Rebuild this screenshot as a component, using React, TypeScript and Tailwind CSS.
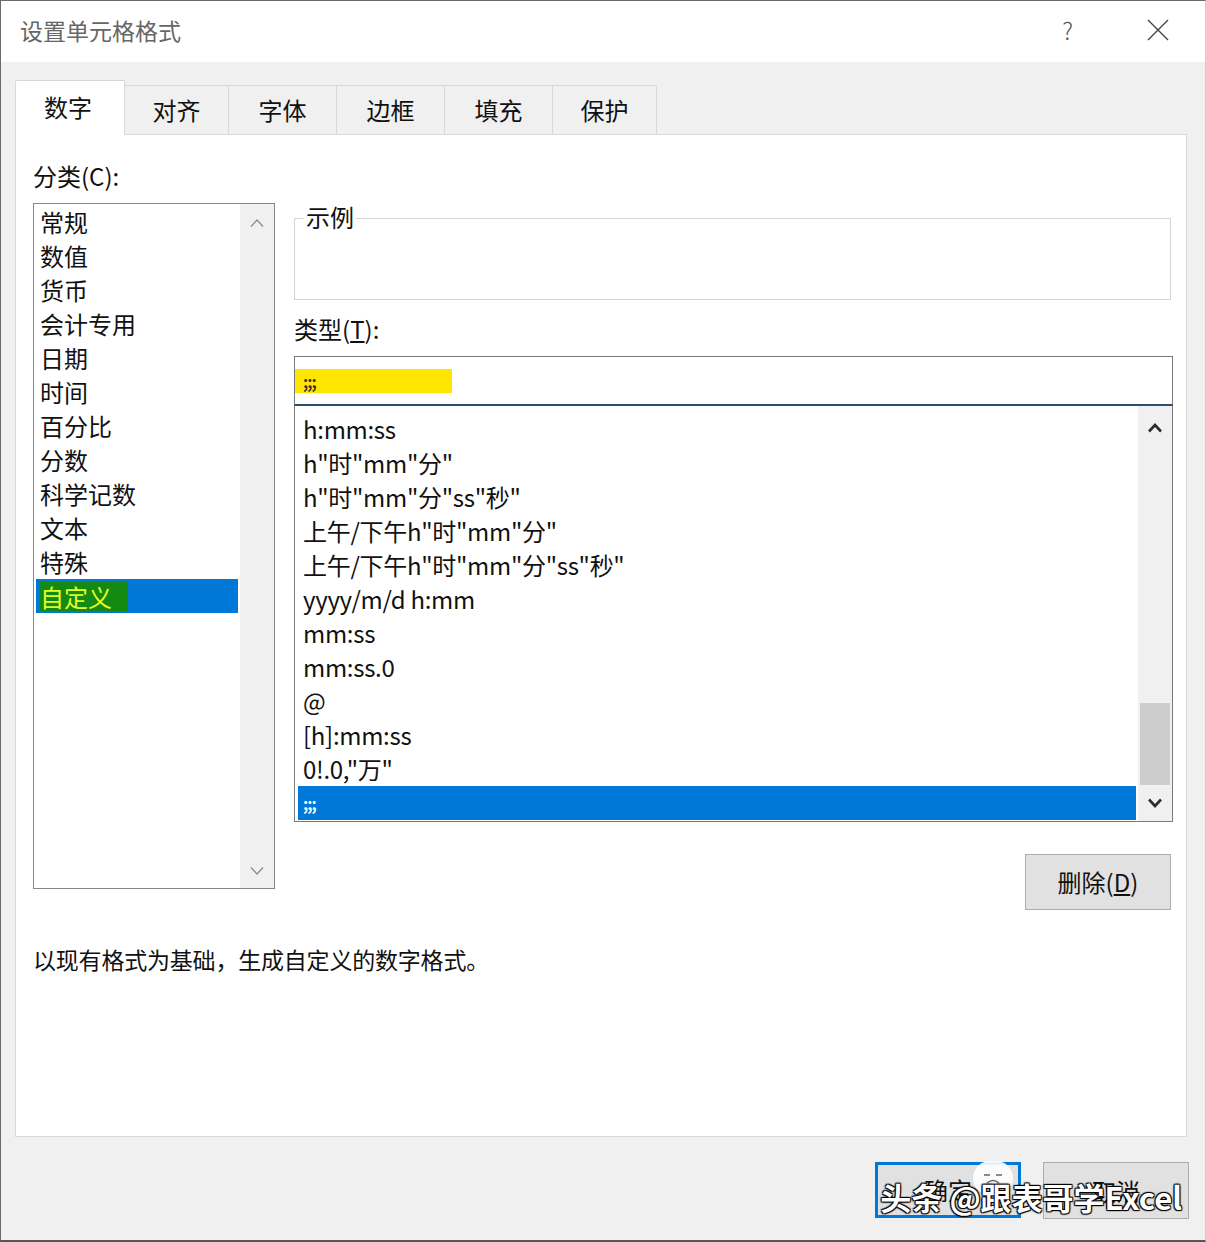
import React from 'react';

const categories = ['常规', '数值', '货币', '会计专用', '日期', '时间', '百分比', '分数', '科学记数', '文本', '特殊'];

const formats = [
    'h:mm:ss',
    'h"时"mm"分"',
    'h"时"mm"分"ss"秒"',
    '上午/下午h"时"mm"分"',
    '上午/下午h"时"mm"分"ss"秒"',
    'yyyy/m/d h:mm',
    'mm:ss',
    'mm:ss.0',
    '@',
    '[h]:mm:ss',
    '0!.0,"万"',
];

const tabs = [
    { label: '对齐', w: 'w-[104px]' },
    { label: '字体', w: 'w-[108px]' },
    { label: '边框', w: 'w-[108px]' },
    { label: '填充', w: 'w-[108px]' },
    { label: '保护', w: 'w-[104px]' },
];

function Chevron({ up, bold }: { up?: boolean; bold?: boolean }) {
    return (
        <svg width="16" height="10" viewBox="0 0 16 10" fill="none">
            <path
                d={up ? 'M2 8.5 L8 2 L14 8.5' : 'M2 1.5 L8 8 L14 1.5'}
                stroke={bold ? '#2b2b2b' : '#8a8a8a'}
                strokeWidth={bold ? 2.6 : 1.2}
                strokeLinejoin="miter"
            />
        </svg>
    );
}

export default function App() {
    return (
        <div className="w-[1206px] h-[1242px] flex flex-col bg-[#f0f0f0] border-l border-t border-l-[#6b6b6b] border-t-[#6b6b6b] border-b-2 border-b-[#555] border-r border-r-[#d0d0d0] font-['Noto_Sans_CJK_SC','Noto_Sans',sans-serif] text-[#111] overflow-hidden">
            {/* 标题栏 */}
            <div className="h-[61px] bg-white flex items-center pl-[19px] pr-[36px] shrink-0">
                <span className="text-[23px] leading-[28px] text-[#666] -mt-[4px]">设置单元格格式</span>
                <div className="flex-1" />
                <span className="text-[24px] leading-[28px] text-[#555] font-light mr-[74px] -mt-[4px]">?</span>
                <svg width="22" height="22" viewBox="0 0 22 22" className="-mt-[4px]">
                    <path d="M1 1 L21 21 M21 1 L1 21" stroke="#444" strokeWidth="1.4" />
                </svg>
            </div>

            <div className="flex flex-col pl-[14px] pr-[18px]">
                {/* 选项卡 */}
                <div className="flex items-end h-[54px] mt-[18px]">
                    <div className="relative z-10 w-[110px] h-[55px] -mb-px bg-white border border-b-0 border-[#d9d9d9] rounded-t-[2px] flex items-center justify-center text-[24px] leading-[28px] pr-[4px] pb-[2px]">
                        数字
                    </div>
                    {tabs.map((t) => (
                        <div
                            key={t.label}
                            className={`${t.w} h-[49px] bg-[#f0f0f0] border border-l-0 border-b-0 border-[#d9d9d9] flex items-center justify-center text-[24px] leading-[28px]`}
                        >
                            {t.label}
                        </div>
                    ))}
                </div>

                {/* 主面板 */}
                <div className="h-[1003px] bg-white border border-[#d9d9d9] pl-[17px] pt-[27px] flex flex-col">
                    <div className="flex gap-[19px]">
                        {/* 分类 */}
                        <div className="flex flex-col w-[242px]">
                            <div className="h-[28px] text-[24px] leading-[28px]">分类(C):</div>
                            <div className="mt-[13px] h-[686px] border border-[#828790] flex">
                                <div className="flex-1 flex flex-col pt-[1px] px-[2px]">
                                    {categories.map((c) => (
                                        <div key={c} className="h-[34px] px-[4px] text-[24px] leading-[34px]">
                                            {c}
                                        </div>
                                    ))}
                                    <div className="h-[34px] bg-[#0078d7] pl-[4px] flex items-center">
                                        <span className="bg-[#148a12] text-[#e2ff2a] text-[24px] leading-[29px] pr-[16px]">自定义</span>
                                    </div>
                                </div>
                                <div className="w-[34px] bg-[#f0f0f0] flex flex-col items-center justify-between pt-[14px] pb-[12px]">
                                    <Chevron up />
                                    <Chevron />
                                </div>
                            </div>
                        </div>

                        {/* 右侧 */}
                        <div className="flex flex-col w-[879px]">
                            <div className="relative mt-[56px] h-[82px] mr-[2px] border border-[#d4d4d4]">
                                <span className="absolute -top-[16px] left-[9px] bg-white px-[2px] text-[24px] leading-[28px]">示例</span>
                            </div>
                            <div className="mt-[15px] h-[28px] text-[24px] leading-[28px]">
                                类型(<span className="underline underline-offset-2">T</span>):
                            </div>
                            <div className="mt-[13px] h-[50px] border border-[#7a7a7a] border-b-2 border-b-[#2f4d6e] flex items-center">
                                <span className="w-[157px] h-[24px] bg-[#ffe600] pl-[8px] text-[16px] leading-[24px] font-bold text-[#333] tracking-[-1px]">;;;</span>
                            </div>
                            <div className="h-[416px] border border-t-0 border-[#7a7a7a] flex">
                                <div className="flex-1 flex flex-col pt-[6px] pl-[3px] pr-[2px]">
                                    {formats.map((f) => (
                                        <div key={f} className="h-[34px] px-[5px] text-[24px] leading-[34px] whitespace-nowrap tracking-[-0.3px]">
                                            {f}
                                        </div>
                                    ))}
                                    <div className="h-[34px] bg-[#0078d7] px-[5px] text-[16px] leading-[34px] font-bold text-white tracking-[-1px]">;;;</div>
                                </div>
                                <div className="w-[34px] bg-[#f0f0f0] flex flex-col items-center">
                                    <div className="mt-[17px]">
                                        <Chevron up bold />
                                    </div>
                                    <div className="flex-1" />
                                    <div className="w-[30px] h-[82px] bg-[#cdcdcd]" />
                                    <div className="h-[36px] flex items-center">
                                        <Chevron bold />
                                    </div>
                                </div>
                            </div>
                            <div className="mt-[32px] flex justify-end pr-[2px]">
                                <div className="w-[146px] h-[56px] bg-[#e1e1e1] border border-[#adadad] flex items-center justify-center text-[24px] leading-[28px]">
                                    删除(<span className="underline underline-offset-2">D</span>)
                                </div>
                            </div>
                        </div>
                    </div>

                    <div className="mt-[35px] h-[28px] text-[23px] leading-[28px] tracking-[-0.2px]">以现有格式为基础，生成自定义的数字格式。</div>
                </div>

                {/* 底部按钮 */}
                <div className="relative mt-[25px] flex justify-end gap-[22px] -mr-[2px]">
                    <div className="w-[146px] h-[56px] bg-[#e1e1e1] border-[3px] border-[#0078d7] flex items-center justify-center text-[24px] leading-[28px]">
                        确定
                    </div>
                    <div className="w-[146px] h-[57px] bg-[#e1e1e1] border border-[#adadad] flex items-center justify-center text-[24px] leading-[28px]">
                        取消
                    </div>
                    {/* 水印 */}
                    <div className="absolute left-[958px] top-[-1px] w-[40px] h-[34px] rounded-full bg-white/90 flex items-center justify-center">
                        <svg width="28" height="20" viewBox="0 0 28 20">
                            <path d="M5 7 L11 7 M17 7 L23 7 M8 15 Q14 10 20 15" stroke="#666" strokeWidth="1.5" fill="none" />
                        </svg>
                    </div>
                    <div className="absolute right-[7px] top-[15px] text-[31px] leading-[40px] text-white font-bold whitespace-nowrap [text-shadow:1px_1px_1px_#000,-1px_-1px_1px_#000,1px_-1px_1px_#000,-1px_1px_1px_#000]">
                        头条 @跟表哥学Excel
                    </div>
                </div>
            </div>
        </div>
    );
}
